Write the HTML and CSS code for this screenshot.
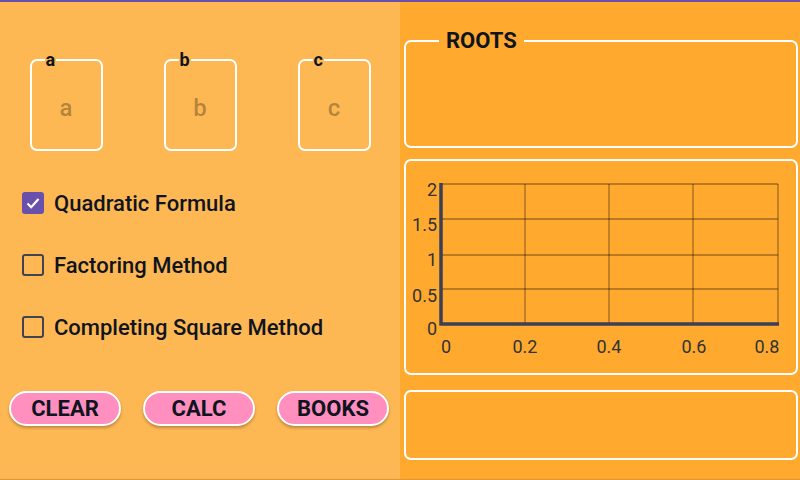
FILE: index.html
```html
<!DOCTYPE html>
<html lang="en">

<head>
    <meta charset="utf-8">
    <meta name="viewport" content="width=device-width, initial-scale=1.0">
    <title>Quadratic Solver</title>
    <link rel="stylesheet" href="styles.css">
</head>

<body>
    <div class="app">
        <div class="inputs">
            <div class="coefs">
                <fieldset class="coef">
                    <legend>a</legend>
                    <input type="text" placeholder="a">
                </fieldset>
                <fieldset class="coef">
                    <legend>b</legend>
                    <input type="text" placeholder="b">
                </fieldset>
                <fieldset class="coef">
                    <legend>c</legend>
                    <input type="text" placeholder="c">
                </fieldset>
            </div>

            <div class="methods">
                <label class="method">
                    <span class="check checked">
                        <svg viewBox="0 0 22 22" width="22" height="22">
                            <path d="M5.5 11.5 L9.2 15.2 L16.5 7" fill="none" stroke="#fff" stroke-width="2.2" />
                        </svg>
                    </span>
                    Quadratic Formula
                </label>
                <label class="method">
                    <span class="check"></span>
                    Factoring Method
                </label>
                <label class="method">
                    <span class="check"></span>
                    Completing Square Method
                </label>
            </div>

            <div class="actions">
                <button class="pill">CLEAR</button>
                <button class="pill">CALC</button>
                <button class="pill">BOOKS</button>
            </div>
        </div>

        <div class="results">
            <fieldset class="box roots">
                <legend>ROOTS</legend>
            </fieldset>

            <div class="box chart">
                <svg viewBox="0 0 390 212" width="390" height="212">
                    <g class="grid">
                        <line x1="34" y1="23" x2="372" y2="23" />
                        <line x1="34" y1="58" x2="372" y2="58" />
                        <line x1="34" y1="94" x2="372" y2="94" />
                        <line x1="34" y1="128" x2="372" y2="128" />
                        <line x1="119" y1="23" x2="119" y2="162" />
                        <line x1="203" y1="23" x2="203" y2="162" />
                        <line x1="287" y1="23" x2="287" y2="162" />
                        <line x1="372" y1="23" x2="372" y2="162" />
                    </g>
                    <path class="axis" d="M35 22 V163 H373" />
                    <g class="ylabels">
                        <text x="31" y="35">2</text>
                        <text x="31" y="70">1.5</text>
                        <text x="31" y="105">1</text>
                        <text x="31" y="141">0.5</text>
                        <text x="31" y="174">0</text>
                    </g>
                    <g class="xlabels">
                        <text x="40" y="192">0</text>
                        <text x="119" y="192">0.2</text>
                        <text x="203" y="192">0.4</text>
                        <text x="288" y="192">0.6</text>
                        <text x="361" y="192">0.8</text>
                    </g>
                </svg>
            </div>

            <div class="box output"></div>
        </div>
    </div>
</body>

</html>
```

FILE: styles.css
```css
html {
    width: 100%;
    height: 100%;
    font-family: 'Roboto', 'Liberation Sans', sans-serif;
}

body {
    margin: 0;
    color: #0f1420;
}

.app {
    display: grid;
    grid-template-columns: 400px 400px;
    height: 478px;
    border-top: 2px solid #6a50ad;
}

/* left side */

.inputs {
    background: #fdb853;
    display: flex;
    flex-direction: column;
    padding-top: 51px;
    box-shadow: inset 0 -2px 1px -1px #d9963a;
}

.coefs {
    display: grid;
    grid-template-columns: repeat(3, 134px);
    justify-items: center;
    margin-left: -1px;
}

.coef {
    width: 73px;
    min-inline-size: 0;
    box-sizing: border-box;
    margin: 0;
    padding: 0;
    border: 2px solid #fff;
    border-radius: 7px;
}

.coef legend {
    margin-left: 13px;
    padding: 0 1px;
    font-size: 18px;
    font-weight: bold;
    line-height: 14px;
}

.coef input {
    display: block;
    width: 100%;
    height: 82px;
    box-sizing: border-box;
    border: none;
    background: none;
    outline: none;
    text-align: center;
    font-family: inherit;
    font-size: 24px;
    font-weight: 500;
    color: #0f1420;
}

.coef input::placeholder {
    color: #0000004d;
}

.methods {
    display: flex;
    flex-direction: column;
    margin-top: 21px;
    padding-left: 22px;
}

.method {
    display: flex;
    align-items: center;
    gap: 10px;
    height: 62px;
    font-size: 22px;
    font-weight: 500;
}

.check {
    width: 22px;
    height: 22px;
    box-sizing: border-box;
    border: 2px solid #424250;
    border-radius: 3px;
}

.check.checked {
    border: none;
    background: #6a50ad;
}

.check svg {
    display: block;
}

.actions {
    display: grid;
    grid-template-columns: repeat(3, 134px);
    justify-items: center;
    margin-top: 33px;
    margin-left: -2px;
}

.pill {
    width: 112px;
    height: 35px;
    border: 2px solid #fff;
    border-radius: 18px;
    background: #ff8fbe;
    box-shadow: 0 2px 3px #00000040;
    font-family: inherit;
    font-size: 22px;
    font-weight: bold;
    color: #0f1420;
    padding: 0;
    cursor: pointer;
}

/* right side */

.results {
    background: #ffaa2f;
    display: flex;
    flex-direction: column;
    padding: 0 2px 0 4px;
    box-shadow: inset 0 -2px 1px -1px #d9963a;
}

.box {
    border: 2px solid #fff;
    border-radius: 7px;
    box-sizing: border-box;
}

.roots {
    margin: 27px 0 0 0;
    padding: 0;
    height: 119px;
}

.roots legend {
    margin-left: 33px;
    padding: 0 7px;
    font-size: 22px;
    font-weight: bold;
    line-height: 24px;
}

.chart {
    margin-top: 11px;
    height: 216px;
}

.chart svg {
    display: block;
}

.grid line {
    stroke: #00000060;
    stroke-width: 1.3;
}

.axis {
    fill: none;
    stroke: #3c3f55;
    stroke-width: 3.5;
}

.chart text {
    font-family: 'Roboto', sans-serif;
    font-size: 18px;
    fill: #333;
}

.ylabels text {
    text-anchor: end;
}

.xlabels text {
    text-anchor: middle;
}

.output {
    margin-top: 15px;
    height: 70px;
}
```
